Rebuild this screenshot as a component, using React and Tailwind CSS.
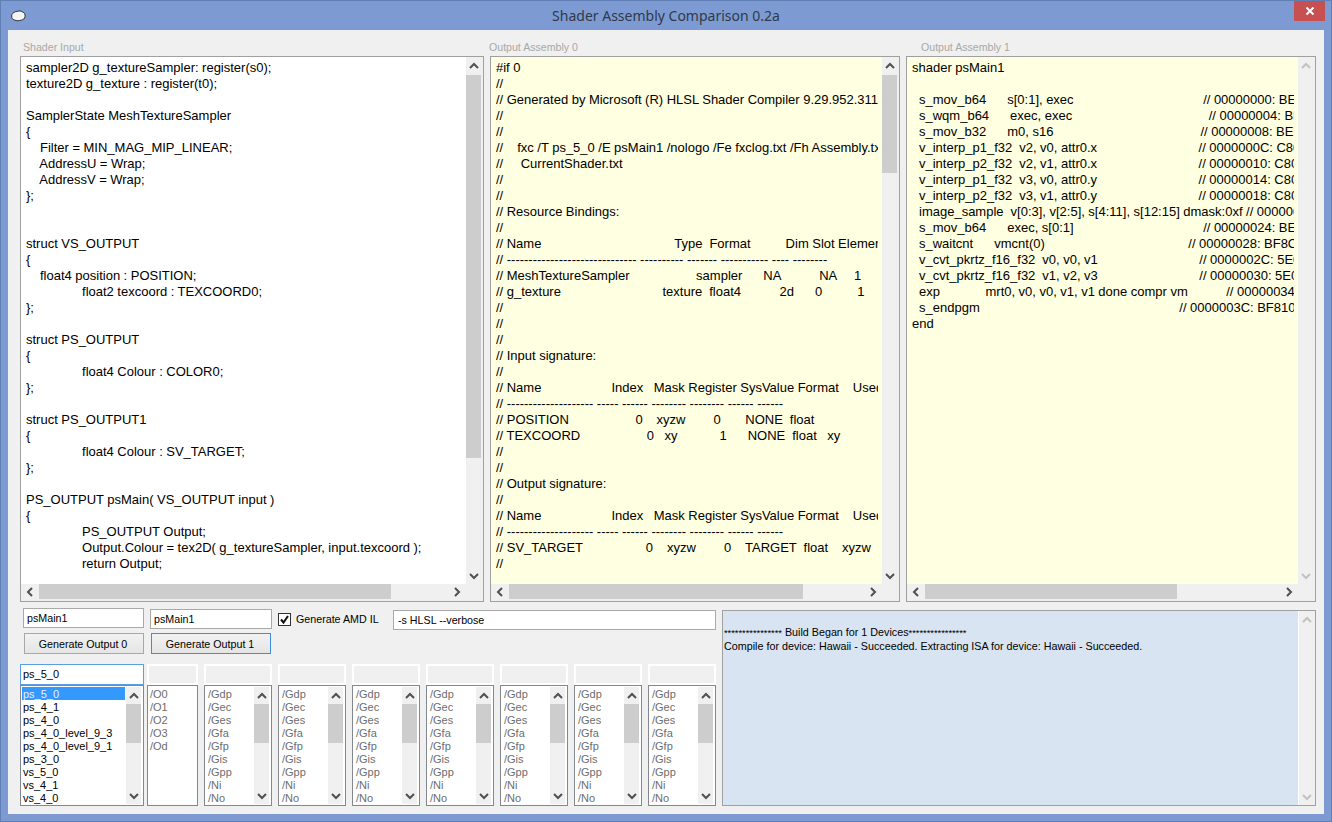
import React from 'react';

const L = (...parts) => parts.map((p) => (typeof p === 'number' ? ' '.repeat(p) : p)).join('');

const input0 = [
  'sampler2D g_textureSampler: register(s0);',
  'texture2D g_texture : register(t0);',
  '',
  'SamplerState MeshTextureSampler',
  '{',
  L(4, 'Filter = MIN_MAG_MIP_LINEAR;'),
  L(4, 'AddressU = Wrap;'),
  L(4, 'AddressV = Wrap;'),
  '};',
  '',
  '',
  'struct VS_OUTPUT',
  '{',
  L(4, 'float4 position : POSITION;'),
  L(16, 'float2 texcoord : TEXCOORD0;'),
  '};',
  '',
  'struct PS_OUTPUT',
  '{',
  L(16, 'float4 Colour : COLOR0;'),
  '};',
  '',
  'struct PS_OUTPUT1',
  '{',
  L(16, 'float4 Colour : SV_TARGET;'),
  '};',
  '',
  'PS_OUTPUT psMain( VS_OUTPUT input )',
  '{',
  L(16, 'PS_OUTPUT Output;'),
  L(16, 'Output.Colour = tex2D( g_textureSampler, input.texcoord );'),
  L(16, 'return Output;'),
];

const output0 = [
  '#if 0',
  '//',
  '// Generated by Microsoft (R) HLSL Shader Compiler 9.29.952.3111',
  '//',
  '//',
  L('//', 4, 'fxc /T ps_5_0 /E psMain1 /nologo /Fe fxclog.txt /Fh Assembly.txt'),
  L('//', 5, 'CurrentShader.txt'),
  '//',
  '//',
  '// Resource Bindings:',
  '//',
  L('// Name', 38, 'Type', 2, 'Format', 10, 'Dim Slot Elements'),
  '// ------------------------------ ---------- ------- ----------- ---- --------',
  L('// MeshTextureSampler', 19, 'sampler', 6, 'NA', 11, 'NA', 5, '1'),
  L('// g_texture', 29, 'texture', 2, 'float4', 11, '2d', 6, '0', 10, '1'),
  '//',
  '//',
  '//',
  '// Input signature:',
  '//',
  L('// Name', 20, 'Index', 3, 'Mask Register SysValue Format', 4, 'Used'),
  '// -------------------- ----- ------ -------- -------- ------ ------',
  L('// POSITION', 19, '0', 4, 'xyzw', 8, '0', 7, 'NONE', 2, 'float'),
  L('// TEXCOORD', 19, '0', 3, 'xy', 12, '1', 6, 'NONE', 2, 'float', 3, 'xy'),
  '//',
  '//',
  '// Output signature:',
  '//',
  L('// Name', 20, 'Index', 3, 'Mask Register SysValue Format', 4, 'Used'),
  '// -------------------- ----- ------ -------- -------- ------ ------',
  L('// SV_TARGET', 18, '0', 4, 'xyzw', 8, '0', 4, 'TARGET', 2, 'float', 4, 'xyzw'),
  '//',
];

const output1 = [
  'shader psMain1',
  '',
  L(2, 's_mov_b64', 6, 's[0:1], exec', 37, '// 00000000: BE8A0000'),
  L(2, 's_wqm_b64', 6, 'exec, exec', 39, '// 00000004: BEFE0A7E'),
  L(2, 's_mov_b32', 6, 'm0, s16', 42, '// 00000008: BEFC0310'),
  L(2, 'v_interp_p1_f32', 2, 'v2, v0, attr0.x', 29, '// 0000000C: C8080000'),
  L(2, 'v_interp_p2_f32', 2, 'v2, v1, attr0.x', 29, '// 00000010: C8090001'),
  L(2, 'v_interp_p1_f32', 2, 'v3, v0, attr0.y', 29, '// 00000014: C80C0100'),
  L(2, 'v_interp_p2_f32', 2, 'v3, v1, attr0.y', 29, '// 00000018: C80D0101'),
  L(2, 'image_sample', 2, 'v[0:3], v[2:5], s[4:11], s[12:15] dmask:0xf // 0000001C: F0800F00'),
  L(2, 's_mov_b64', 6, 'exec, s[0:1]', 37, '// 00000024: BEFE040A'),
  L(2, 's_waitcnt', 6, 'vmcnt(0)', 41, '// 00000028: BF8C1F70'),
  L(2, 'v_cvt_pkrtz_f16_f32', 2, 'v0, v0, v1', 29, '// 0000002C: 5E000300'),
  L(2, 'v_cvt_pkrtz_f16_f32', 2, 'v1, v2, v3', 29, '// 00000030: 5E020702'),
  L(2, 'exp', 13, 'mrt0, v0, v0, v1, v1 done compr vm', 11, '// 00000034: F8001C0F'),
  L(2, 's_endpgm', 57, '// 0000003C: BF810000'),
  'end',
];

const flags = ['/Gdp', '/Gec', '/Ges', '/Gfa', '/Gfp', '/Gis', '/Gpp', '/Ni', '/No'];
const profiles = ['ps_5_0', 'ps_4_1', 'ps_4_0', 'ps_4_0_level_9_3', 'ps_4_0_level_9_1', 'ps_3_0', 'vs_5_0', 'vs_4_1', 'vs_4_0'];
const optim = ['/O0', '/O1', '/O2', '/O3', '/Od'];
const CHEVRONS = { up: '1,7 5,3 9,7', down: '1,3 5,7 9,3', left: '7,1 3,5 7,9', right: '3,1 7,5 3,9' };

function Chev({ dir, muted }) {
  return (
    <svg width="10" height="10" viewBox="0 0 10 10" fill="none" stroke={muted ? '#c2c2c2' : '#505050'} strokeWidth="2">
      <polyline points={CHEVRONS[dir]} />
    </svg>
  );
}

function VBar({ thumb, muted, small }) {
  return (
    <div className={small ? 'w-[15px] shrink-0 flex flex-col bg-[#f0f0f0]' : 'w-[17px] shrink-0 flex flex-col bg-[#f0f0f0]'}>
      <div className={small ? 'w-[15px] h-[17px] flex items-center justify-center' : 'w-[15px] h-[18px] flex items-center justify-center'}>
        <Chev dir="up" muted={muted} />
      </div>
      {thumb}
      <div className="flex-1" />
      <div className="w-[15px] h-[17px] flex items-center justify-center">
        <Chev dir="down" muted={muted} />
      </div>
    </div>
  );
}

function Panel({ lines, bg, vThumb, hThumb, muted }) {
  return (
    <div className="h-[546px] border border-[#a0a0a0] bg-[#f0f0f0] flex flex-col">
      <div className="flex flex-1 min-h-0">
        <div className={bg + ' flex-1 min-w-0 pl-[5px] pr-[4px] pt-[3px] overflow-hidden'}>
          <div className="overflow-hidden whitespace-pre text-[13px] leading-[16px] [word-spacing:-0.11px] text-black">
            {lines.map((l, i) => (
              <div key={i} className="h-[16px]">{l}</div>
            ))}
          </div>
        </div>
        <VBar thumb={vThumb} muted={muted} />
      </div>
      <div className="h-[17px] flex shrink-0">
        <div className="w-[18px] h-[15px] flex items-center justify-center"><Chev dir="left" /></div>
        {hThumb}
        <div className="flex-1" />
        <div className="w-[18px] h-[15px] flex items-center justify-center"><Chev dir="right" /></div>
        <div className="w-[17px]" />
      </div>
    </div>
  );
}

function Combo() {
  return <div className="h-[21px] border-2 border-white bg-[#f0f0f0]" />;
}

function FlagList() {
  return (
    <div className="flex flex-col gap-0">
      <Combo />
      <div className="h-[121px] border border-[#828790] bg-white flex p-px">
        <div className="flex-1 pl-[2px] text-[11px] leading-[14px] text-[#6d6d6d]">
          {flags.map((f) => (
            <div key={f} className="h-[13px]">{f}</div>
          ))}
        </div>
        <VBar small thumb={<div className="w-[15px] h-[39px] bg-[#cdcdcd]" />} />
        <div className="w-[1px]" />
      </div>
    </div>
  );
}

function Btn({ children, active }) {
  return (
    <div
      className={
        (active ? 'border-[#3c8fdc] ' : 'border-[#a8a8a8] ') +
        'w-[120px] h-[21px] border bg-gradient-to-b from-[#f2f2f2] to-[#e5e5e5] flex items-center justify-center pt-[1px] pr-[2px] text-[10.7px] text-black'
      }
    >
      {children}
    </div>
  );
}

export default function App() {
  return (
    <div
      className="w-[1332px] h-[822px] bg-[#7d9bd2] flex flex-col overflow-hidden border border-[#5f7fb5] box-border"
      style={{ fontFamily: '"Liberation Sans", Arial, sans-serif' }}
    >
      <div className="h-[29px] shrink-0 grid grid-cols-[1fr_auto_1fr] items-start">
        <div className="pl-[10px] pt-[9px]">
          <svg width="15" height="12" viewBox="0 0 15 12">
            <path
              d="M2.5 3 C3.5 1.5 5 1.5 6 1.5 C8 .6 10 .8 11.5 2 C13.5 2.6 14.5 4.5 14 6.5 C14 8.8 12 9.8 10.5 10 C8 11 5.5 11 3.5 10 C1.5 9.5 .5 8 .7 6 C.6 4.8 1.2 3.6 2.5 3 Z"
              fill="#f4f4f4"
              stroke="#303030"
              strokeWidth="1"
            />
          </svg>
        </div>
        <div className="pt-[5px] text-[14px] leading-[20px] text-[#2f3a4a]" style={{ fontFamily: '"Noto Sans", sans-serif' }}>
          Shader Assembly Comparison 0.2a
        </div>
        <div className="flex justify-end pr-[6px]">
          <div className="w-[31px] h-[20px] bg-[#c75050] flex items-center justify-center">
            <svg width="10" height="10" viewBox="0 0 10 10" stroke="#fff" strokeWidth="2">
              <path d="M1.5 1.5 L8.5 8.5 M8.5 1.5 L1.5 8.5" />
            </svg>
          </div>
        </div>
      </div>

      <div className="ml-[7px] mr-[7px] h-[784px] bg-[#f0f0f0] pl-[12px] pr-[8px] pt-[10px] shrink-0">
        <div className="grid grid-cols-[464px_410px_410px] gap-x-[6px]">
          <div className="h-[16px] pl-[3px] text-[10.6px] leading-[14px] text-[#a8a8a8]">Shader Input</div>
          <div className="h-[16px] ml-[-1px] text-[10.6px] leading-[14px] text-[#a8a8a8]">Output Assembly 0</div>
          <div className="h-[16px] pl-[15px] text-[10.6px] leading-[14px] text-[#a8a8a8]">Output Assembly 1</div>
          <Panel
            lines={input0}
            bg="bg-white"
            vThumb={<div className="w-[15px] h-[383px] bg-[#cdcdcd]" />}
            hThumb={<div className="w-[352px] h-[15px] bg-[#cdcdcd]" />}
          />
          <Panel
            lines={output0}
            bg="bg-[#ffffe1]"
            vThumb={<div className="w-[15px] h-[98px] bg-[#cdcdcd]" />}
            hThumb={<div className="w-[294px] h-[15px] bg-[#cdcdcd]" />}
          />
          <Panel
            lines={output1}
            bg="bg-[#ffffe1]"
            muted
            hThumb={<div className="w-[252px] h-[15px] bg-[#cdcdcd]" />}
          />
        </div>

        <div className="mt-[6px] grid grid-cols-[696px_594px] gap-x-[6px]">
          <div className="flex flex-col">
            <div className="flex items-start h-[22px] text-[10.7px] text-black">
              <div className="ml-[3px] w-[121px] h-[20px] border border-[#a9a9a9] bg-white px-[3px] leading-[18px]">psMain1</div>
              <div className="ml-[6px] mt-[1px] w-[122px] h-[20px] border border-[#a9a9a9] bg-white px-[3px] leading-[18px]">psMain1</div>
              <div className="ml-[6px] mt-[5px] w-[13px] h-[13px] border border-[#333] bg-white flex items-center justify-center">
                <svg width="11" height="11" viewBox="0 0 11 11" fill="none" stroke="#111" strokeWidth="2">
                  <path d="M2 5.5 L4.5 8.5 L9 2" />
                </svg>
              </div>
              <div className="ml-[5px] mt-[4px] w-[97px] leading-[15px]">Generate AMD IL</div>
              <div className="mt-[2px] w-[323px] h-[20px] border border-[#a9a9a9] bg-white px-[4px] leading-[18px]">-s HLSL --verbose</div>
            </div>
            <div className="mt-[3px] flex">
              <div className="ml-[4px]"><Btn>Generate Output 0</Btn></div>
              <div className="ml-[7px]"><Btn active>Generate Output 1</Btn></div>
            </div>
            <div className="mt-[10px] grid grid-cols-[121px_51px_repeat(7,68px)] gap-x-[6px]">
              <div className="flex flex-col w-[124px]">
                <div className="h-[21px] border border-[#5aa0e0] bg-white pl-[2px] text-[11px] leading-[19px] text-black">ps_5_0</div>
                <div className="h-[121px] border border-[#828790] bg-white flex p-px">
                  <div className="flex-1 min-w-0 text-[11px] leading-[14px] text-black">
                    {profiles.map((p, i) => (
                      <div key={p} className={i === 0 ? 'h-[13px] pl-[1px] bg-[#3399ff] text-[#e8eef8]' : 'h-[13px] pl-[1px]'}>{p}</div>
                    ))}
                  </div>
                  <div className="w-px" />
                  <VBar small thumb={<div className="w-[15px] h-[39px] bg-[#cdcdcd]" />} />
                  <div className="w-px" />
                </div>
              </div>
              <div className="flex flex-col">
                <Combo />
                <div className="h-[121px] border border-[#828790] bg-white p-px pl-[2px] text-[11px] leading-[14px] text-[#6d6d6d]">
                  {optim.map((o) => (
                    <div key={o} className="h-[13px]">{o}</div>
                  ))}
                </div>
              </div>
              <FlagList />
              <FlagList />
              <FlagList />
              <FlagList />
              <FlagList />
              <FlagList />
              <FlagList />
            </div>
          </div>
          <div className="mt-[2px] h-[196px] border border-[#a0a0a0] bg-[#d8e4f1] flex">
            <div className="flex-1 min-w-0 pl-[1px] pt-[15px] text-[10.75px] leading-[13px] text-black whitespace-pre">
              <div><span className="text-[9.3px]">****************</span> Build Began for 1 Devices<span className="text-[9.3px]">****************</span></div>
              <div>Compile for device: Hawaii - Succeeded. Extracting ISA for device: Hawaii - Succeeded.</div>
            </div>
            <div className="w-[17px] shrink-0 bg-[#f0f0f0] flex flex-col justify-between border-l border-white">
              <div className="h-[17px] flex items-center justify-center"><Chev dir="up" muted /></div>
              <div className="h-[17px] flex items-center justify-center"><Chev dir="down" muted /></div>
            </div>
          </div>
        </div>
      </div>
    </div>
  );
}
